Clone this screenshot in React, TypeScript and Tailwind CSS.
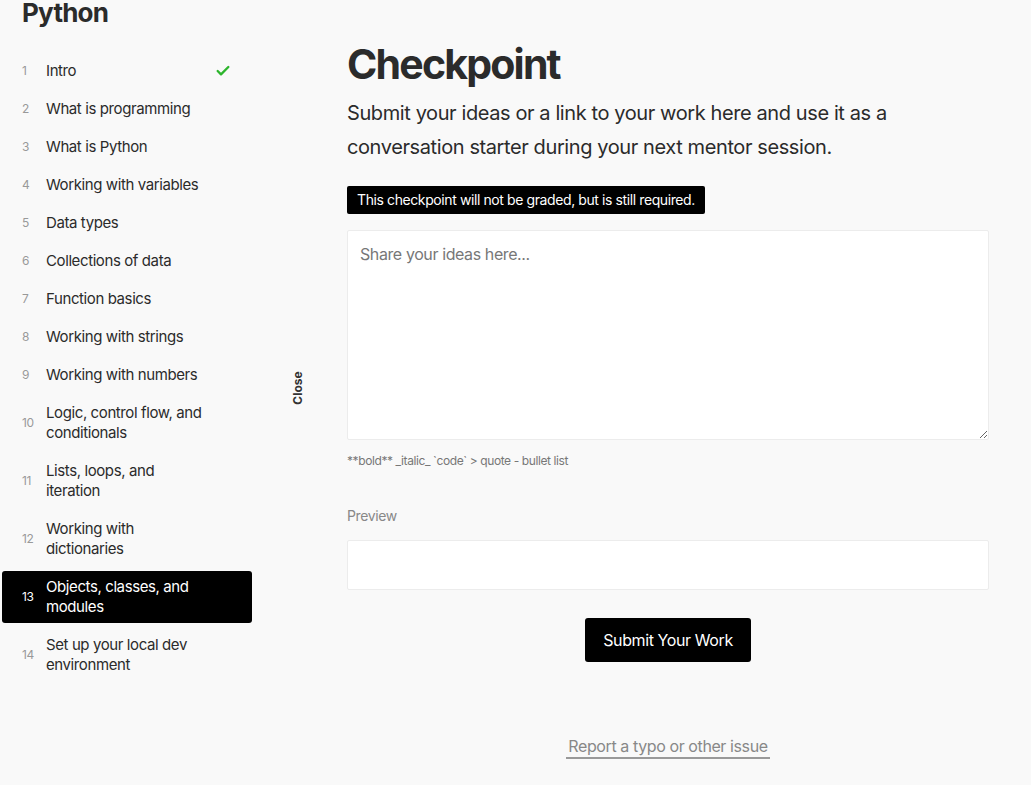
import { Check } from "lucide-react";

const lessons = [
  "Intro",
  "What is programming",
  "What is Python",
  "Working with variables",
  "Data types",
  "Collections of data",
  "Function basics",
  "Working with strings",
  "Working with numbers",
  "Logic, control flow, and conditionals",
  "Lists, loops, and iteration",
  "Working with dictionaries",
  "Objects, classes, and modules",
  "Set up your local dev environment",
];

const ACTIVE = 13;

function Sidebar() {
  return (
    <aside className="w-[252px] shrink-0 pl-[2px]">
      <h1 className="-mt-[3px] pl-5 text-[26px] font-bold leading-[32px] tracking-[-0.03em] text-[#2b2b2b]">Python</h1>
      <ul className="mt-[26px] flex flex-col gap-[6px]">
        {lessons.map((title, i) => {
          const n = i + 1;
          const active = n === ACTIVE;
          return (
            <li
              key={n}
              className={
                active
                  ? "relative flex items-center rounded-[3px] bg-black py-1.5 pl-5 pr-[46px] text-white"
                  : "relative flex items-center py-1.5 pl-5 pr-[46px] text-[#2b2b2b]"
              }
            >
              <span className={active ? "w-6 shrink-0 text-[12px] text-white" : "w-6 shrink-0 text-[12px] text-[#999]"}>
                {n}
              </span>
              <span className="text-[15px] leading-5">{title}</span>
              {n === 1 && (
                <Check className="absolute right-[21px] top-1/2 h-4 w-4 -translate-y-1/2 text-[#2db52d]" strokeWidth={3.5} />
              )}
            </li>
          );
        })}
      </ul>
    </aside>
  );
}

export default function App() {
  return (
    <div className="flex min-h-[785px] bg-[#f9f9f9] font-['Inter',sans-serif] tracking-[-0.025em]">
      <Sidebar />

      <div className="flex h-[785px] w-[95px] shrink-0 items-center justify-center pb-[10px] pr-[4px]">
        <span className="-rotate-90 text-[12px] font-bold tracking-normal text-[#333]">Close</span>
      </div>

      <main className="flex-1 pr-[42px] pt-[39px]">
        <h2 className="text-[41px] font-bold leading-[50px] tracking-[-1.8px] text-[#2b2b2b]">Checkpoint</h2>
        <p className="mt-[7px] max-w-[545px] text-[20px] leading-[34px] text-[#2b2b2b]">
          Submit your ideas or a link to your work here and use it as a conversation starter during your next mentor session.
        </p>

        <div className="mt-[22px] inline-block rounded-[2px] bg-black px-[10px] py-[4px] text-[14px] leading-5 text-white">
          This checkpoint will not be graded, but is still required.
        </div>

        <textarea
          className="mt-[16px] block h-[210px] w-full rounded-[2px] border border-[#ececec] bg-white px-[12px] py-[11px] text-[16px] tracking-[-0.025em] text-[#333] outline-none placeholder:text-[#777]"
          placeholder="Share your ideas here..."
        />
        <p className="mt-[12px] text-[12px] text-[#777]">**bold** _italic_ `code` &gt; quote - bullet list</p>

        <p className="mt-[35px] text-[14px] text-[#888]">Preview</p>
        <div className="mt-[14px] h-[50px] rounded-[2px] border border-[#ececec] bg-white" />

        <div className="mt-[28px] flex justify-center">
          <button className="h-[44px] rounded-[3px] bg-black px-[18px] text-[16px] text-white">Submit Your Work</button>
        </div>

        <div className="mt-[73px] flex justify-center">
          <a href="#" className="border-b-2 border-[#999] px-[2px] text-[16px] leading-[22px] text-[#888]">
            Report a typo or other issue
          </a>
        </div>
      </main>
    </div>
  );
}
